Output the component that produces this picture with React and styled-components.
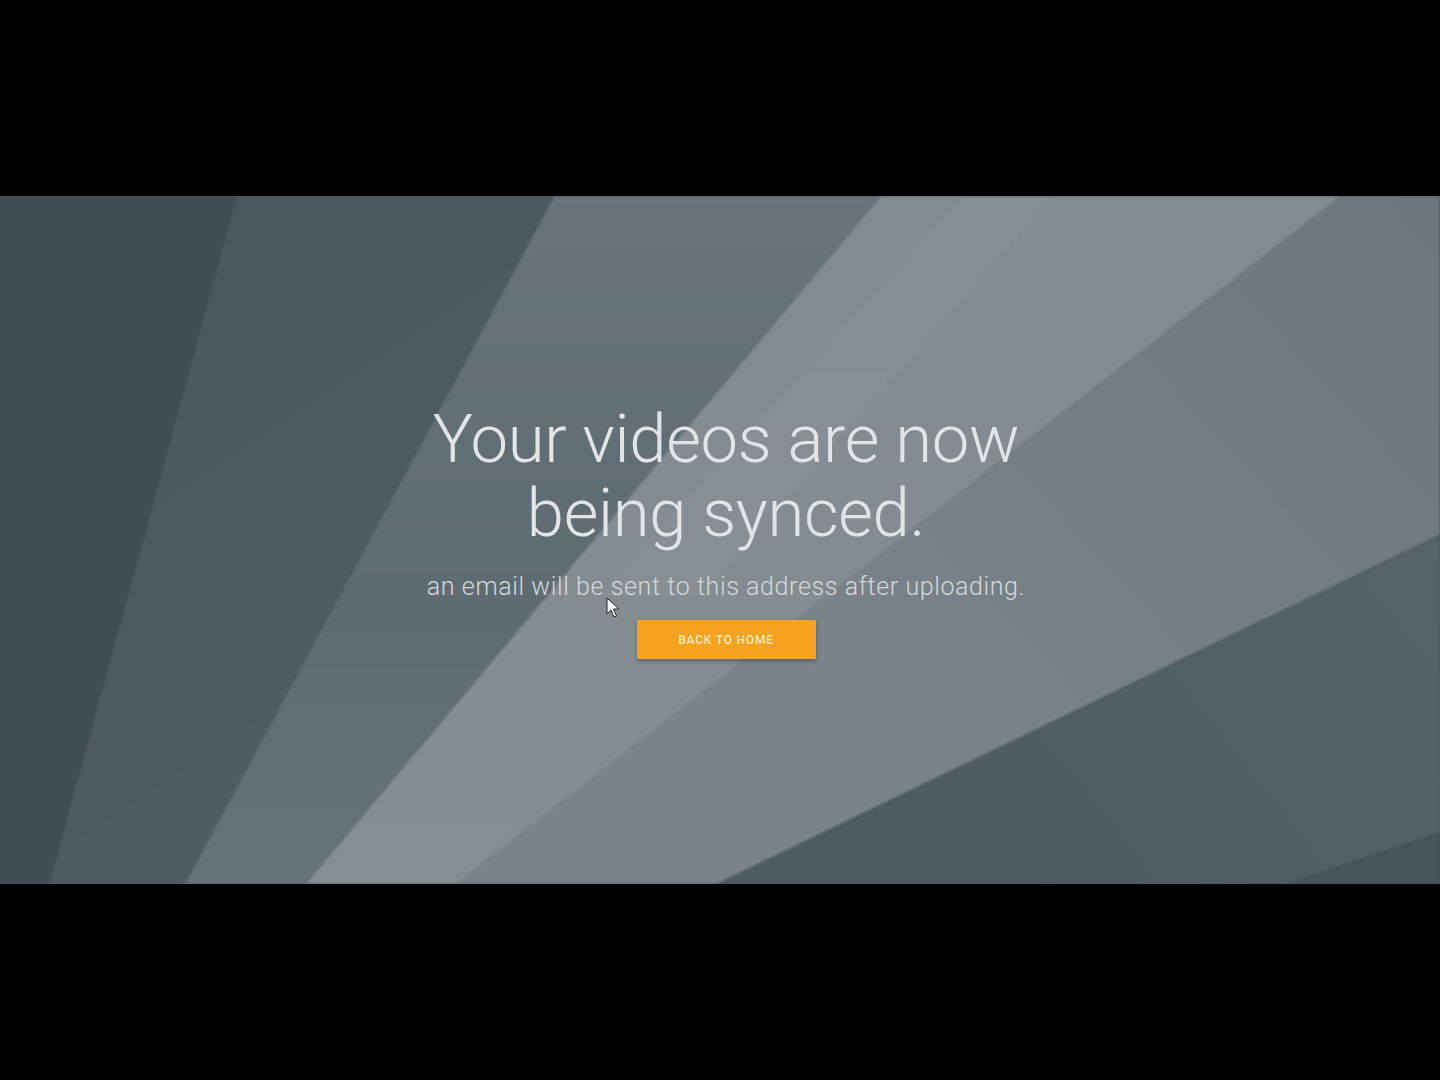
import styled, { createGlobalStyle } from 'styled-components';

const GlobalStyle = createGlobalStyle`
  html, body { margin: 0; padding: 0; background: #000; }
  body { font-family: Roboto, "Noto Sans", "Liberation Sans", sans-serif; }
  * { box-sizing: border-box; }
`;

const Screen = styled.div`
  width: 1440px; height: 1080px;
  display: flex; flex-direction: column;
  background: #000; overflow: hidden;
`;

const Letterbox = styled.div`
  height: 196px; flex: none; background: #000;
`;

const Banner = styled.section`
  position: relative; flex: none;
  height: 688px; overflow: hidden;
  display: flex; flex-direction: column; align-items: center;
  padding: 206px 0 0 12px;
  background: #3f4e55;
`;

const Backdrop = styled.svg`
  position: absolute; inset: 0; width: 100%; height: 100%;
  z-index: 0;
  filter: blur(1.2px);
`;

const Content = styled.div`
  position: relative; z-index: 1;
  display: flex; flex-direction: column; align-items: center;
`;

const Title = styled.h1`
  margin: 0;
  font-family: Roboto, "Liberation Sans", sans-serif;
  font-weight: 300; font-size: 67px; line-height: 74px;
  color: #e2e5e7; text-align: center;
  letter-spacing: -0.3px;
`;

const Note = styled.p`
  margin: 22px 0 0;
  font-family: Roboto, "Liberation Sans", sans-serif;
  font-weight: 300; font-size: 25px; line-height: 29px;
  letter-spacing: 0.6px;
  color: #d3d7da;
`;

const HomeButton = styled.button`
  margin-top: 19px;
  width: 179px; height: 39px;
  border: none; border-radius: 1px;
  background: #f5a21f;
  box-shadow: 0 2px 4px rgba(0, 0, 0, 0.3);
  color: #fde8c4;
  font-family: Roboto, "Liberation Sans", sans-serif;
  font-weight: 500; font-size: 12px; letter-spacing: 0.8px;
  text-transform: uppercase;
  cursor: pointer;
`;

const Pointer = styled.svg`
  position: absolute; left: 606px; top: 401px;
  width: 14px; height: 22px; z-index: 2;
`;

function Rays() {
  return (
    <Backdrop viewBox="0 0 1440 688" preserveAspectRatio="none">
      <defs>
        <linearGradient id="g1" gradientUnits="userSpaceOnUse" x1="240" y1="0" x2="700" y2="688">
          <stop offset="0" stopColor="#4b5860" />
          <stop offset="1" stopColor="#525f67" />
        </linearGradient>
        <linearGradient id="g2" gradientUnits="userSpaceOnUse" x1="0" y1="0" x2="0" y2="688">
          <stop offset="0" stopColor="#68737a" />
          <stop offset="0.6" stopColor="#5f6b72" />
          <stop offset="1" stopColor="#67737a" />
        </linearGradient>
        <linearGradient id="g3" gradientUnits="userSpaceOnUse" x1="0" y1="0" x2="0" y2="688">
          <stop offset="0" stopColor="#838b90" />
          <stop offset="1" stopColor="#868e94" />
        </linearGradient>
        <linearGradient id="g4" gradientUnits="userSpaceOnUse" x1="1440" y1="0" x2="900" y2="500">
          <stop offset="0" stopColor="#6d767c" />
          <stop offset="1" stopColor="#7a838a" />
        </linearGradient>
        <linearGradient id="g5" gradientUnits="userSpaceOnUse" x1="1440" y1="340" x2="1000" y2="688">
          <stop offset="0" stopColor="#57636b" />
          <stop offset="1" stopColor="#4e5b62" />
        </linearGradient>
      </defs>
      <rect x="-10" y="-10" width="1460" height="708" fill="#3f4e55" />
      <polygon points="240,-10 1450,-10 1450,698 47,698" fill="url(#g1)" />
      <polygon points="560,-10 1450,-10 1450,698 180,698" fill="url(#g2)" />
      <polygon points="890,-10 1450,-10 1450,698 298,698" fill="url(#g3)" />
      <polygon points="975,-10 1060,-10 700,400 600,400" fill="#ffffff" opacity="0.03" />
      <polygon points="1353,-10 1450,-10 1450,698 442,698" fill="url(#g4)" />
      <polygon points="1450,333 1450,698 695,698" fill="url(#g5)" />
      <polygon points="1450,632 1450,698 1255,698" fill="#46535a" />
    </Backdrop>
  );
}

export default function App() {
  return (
    <>
      <GlobalStyle />
      <Screen>
        <Letterbox />
        <Banner>
          <Rays />
          <Content>
            <Title>
              Your videos are now
              <br />
              being synced.
            </Title>
            <Note>an email will be sent to this address after uploading.</Note>
            <HomeButton>Back to home</HomeButton>
          </Content>
          <Pointer viewBox="0 0 14 22">
            <path d="M1 1 L1 17 L5 13 L8 20 L10.5 19 L7.5 12 L13 12 Z" fill="#fff" stroke="#222" strokeWidth="1" strokeLinejoin="round" />
          </Pointer>
        </Banner>
        <Letterbox />
      </Screen>
    </>
  );
}
